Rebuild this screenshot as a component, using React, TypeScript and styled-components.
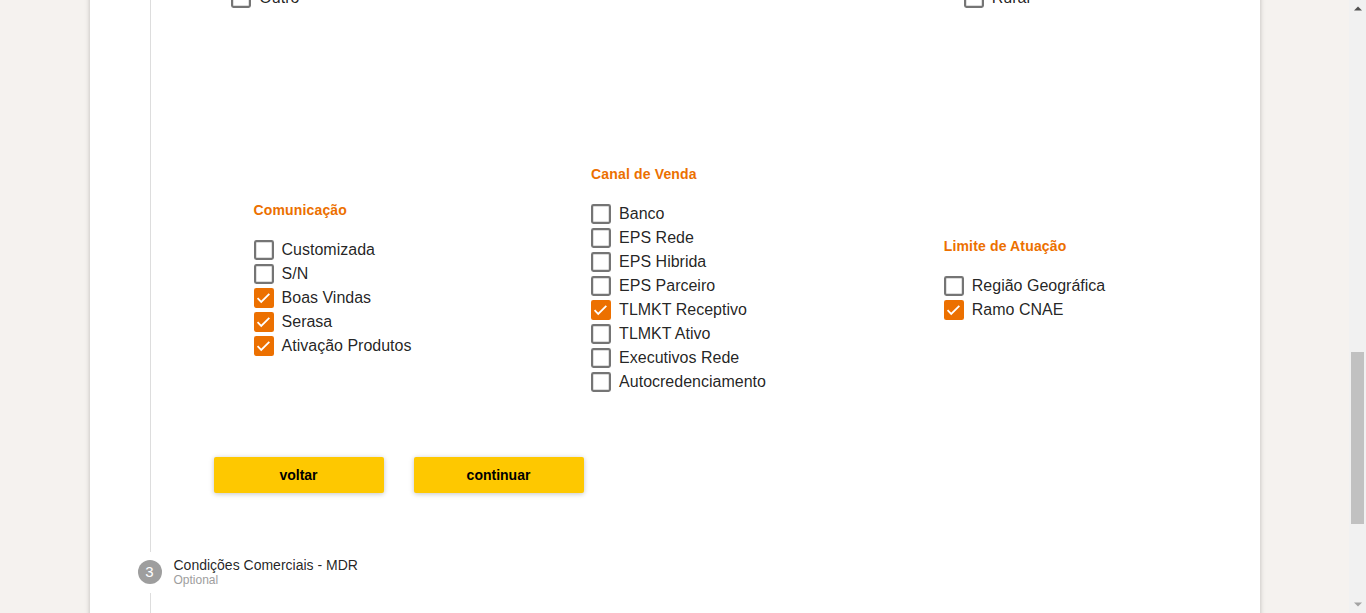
import React, { useLayoutEffect, useRef, useState } from "react";
import styled, { createGlobalStyle } from "styled-components";

const ORANGE = "#ec7000";
const SCROLL_TOP = 1194;

const Global = createGlobalStyle`
  html, body { margin: 0; padding: 0; overflow: hidden; }
  body {
    background: #f5f2ef;
    font-family: "Liberation Sans", Arial, sans-serif;
    color: rgba(0, 0, 0, 0.87);
  }
`;

const Shell = styled.div`
  display: flex;
  height: 100vh;
`;

const Main = styled.main`
  flex: 1;
  min-width: 0;
  overflow-y: auto;
  scrollbar-width: none;
  &::-webkit-scrollbar { display: none; }
`;

const Rail = styled.div`
  width: 17px;
  flex: none;
  display: flex;
  flex-direction: column;
  background: #f1f1f1;
`;

const RailButton = styled.div`
  height: 17px;
  flex: none;
  display: flex;
  align-items: center;
  justify-content: center;
`;

const Track = styled.div`
  flex: 1;
  position: relative;
`;

const Thumb = styled.div`
  position: absolute;
  left: 2px;
  right: 2px;
  background: #c1c1c1;
`;

const Page = styled.div`
  padding: 30px 0 58px;
`;

const Card = styled.div`
  width: 1170px;
  margin: 0 auto;
  background: #fff;
  box-shadow: 0 1px 6px rgba(0, 0, 0, 0.12), 0 1px 4px rgba(0, 0, 0, 0.12);
  padding: 24px 0;
  box-sizing: border-box;
`;

const StepHeader = styled.div`
  display: flex;
  align-items: center;
  gap: 12px;
  padding: 5px 0 6px 48px;
`;

const StepCircle = styled.div<{ $active?: boolean }>`
  width: 24px;
  height: 24px;
  border-radius: 50%;
  background: ${(p) => (p.$active ? ORANGE : "#9e9e9e")};
  color: #fff;
  font-size: 15px;
  line-height: 24px;
  text-align: center;
  flex: none;
`;

const StepLabel = styled.div`
  display: flex;
  flex-direction: column;
  justify-content: center;
  min-height: 30px;
`;

const StepTitle = styled.div`
  font-size: 14px;
  line-height: 16px;
  color: rgba(0, 0, 0, 0.87);
`;

const StepOptional = styled.div`
  font-size: 12px;
  line-height: 14px;
  color: #9e9e9e;
`;

const StepBody = styled.div<{ $open?: boolean }>`
  margin-left: 60px;
  border-left: 1px solid #dddddd;
  min-height: 24px;
  padding: ${(p) => (p.$open ? "24px 62px 59px 9px" : "0")};
`;

const Sections = styled.div`
  display: flex;
  flex-direction: column;
  gap: 156px;
`;

const SectionGrid = styled.div`
  display: grid;
  grid-template-columns: repeat(3, 1fr);
  justify-items: center;
  align-items: center;
`;

const Group = styled.div`
  display: flex;
  flex-direction: column;
`;

const GroupTitle = styled.div`
  color: ${ORANGE};
  font-weight: bold;
  font-size: 14px;
  line-height: 16px;
  letter-spacing: 0.15px;
  margin-bottom: 20px;
`;

const Row = styled.label`
  display: flex;
  align-items: center;
  gap: 8px;
  height: 24px;
  font-size: 16px;
  white-space: nowrap;
  cursor: pointer;
`;

const BoxSvg = styled.svg`
  width: 20px;
  height: 20px;
  flex: none;
  display: block;
`;

const Actions = styled.div`
  display: flex;
  gap: 30px;
  margin: 63px 0 0 54px;
`;

const Button = styled.button`
  width: 170px;
  height: 36px;
  border: none;
  border-radius: 2px;
  background: #fec800;
  color: #000;
  font-family: "Liberation Sans", Arial, sans-serif;
  font-weight: bold;
  font-size: 14px;
  box-shadow: 0 1px 6px rgba(0, 0, 0, 0.12), 0 1px 4px rgba(0, 0, 0, 0.12);
  cursor: pointer;
`;

function Checkbox({ checked }: { checked?: boolean }) {
  return checked ? (
    <BoxSvg viewBox="3 3 18 18">
      <rect x="3" y="3" width="18" height="18" rx="2" fill={ORANGE} />
      <path d="M6.2 12.2l3.3 3.3 7.3-7.3" fill="none" stroke="#fff" strokeWidth="1.6" />
    </BoxSvg>
  ) : (
    <BoxSvg viewBox="3 3 18 18">
      <rect x="4" y="4" width="16" height="16" rx="1.2" fill="none" stroke="#757575" strokeWidth="2" />
    </BoxSvg>
  );
}

type Item = [string, boolean?];
type GroupData = { title: string; items: Item[] };

const sections: GroupData[][] = [
  [
    {
      title: "Ramo de Atividade",
      items: [
        ["Alimentação"], ["Vestuário"], ["Farmácia"], ["Postos"], ["Supermercado"], ["Restaurante"],
        ["Educação"], ["Saúde"], ["Turismo"], ["Automotivo"], ["Construção"], ["Outros"],
      ],
    },
    { title: "Porte", items: [["Micro"], ["Pequeno", true], ["Médio"], ["Grande"]] },
    { title: "Faturamento", items: [["Até 81 mil"], ["Até 360 mil"], ["Até 4,8 mi"], ["Acima de 4,8 mi"], ["Não informado"]] },
  ],
  [
    { title: "Tipo de Pessoa", items: [["Pessoa Física", true], ["Pessoa Jurídica", true]] },
    { title: "Produto", items: [["Crédito"], ["Débito"], ["Voucher"], ["Parcelado"], ["Antecipação"], ["Conta Digital"]] },
    { title: "Bandeiras", items: [["Visa"], ["Mastercard"], ["Elo"], ["Hipercard"], ["Amex"], ["Diners"], ["Cabal"]] },
  ],
  [
    { title: "Segmento", items: [["Varejo"], ["Serviços"], ["Prestadores de Serviços"], ["Indústria"], ["Agronegócio"], ["Outro"]] },
    { title: "Perfil", items: [["Novo"], ["Ativo"], ["Inativo"], ["Reativado"]] },
    { title: "Localização", items: [["Capital"], ["Interior"], ["Litoral"], ["Zona Urbana"], ["Periferia"], ["Rural"]] },
  ],
  [
    {
      title: "Comunicação",
      items: [["Customizada"], ["S/N"], ["Boas Vindas", true], ["Serasa", true], ["Ativação Produtos", true]],
    },
    {
      title: "Canal de Venda",
      items: [
        ["Banco"], ["EPS Rede"], ["EPS Hibrida"], ["EPS Parceiro"], ["TLMKT Receptivo", true],
        ["TLMKT Ativo"], ["Executivos Rede"], ["Autocredenciamento"],
      ],
    },
    { title: "Limite de Atuação", items: [["Região Geográfica"], ["Ramo CNAE", true]] },
  ],
];

function Step({ n, title, optional, active, last, children }: {
  n: number; title: string; optional?: boolean; active?: boolean; last?: boolean; children?: React.ReactNode;
}) {
  return (
    <>
      <StepHeader>
        <StepCircle $active={active}>{n}</StepCircle>
        <StepLabel>
          <StepTitle>{title}</StepTitle>
          {optional && <StepOptional>Optional</StepOptional>}
        </StepLabel>
      </StepHeader>
      {!last && <StepBody $open={!!children}>{children}</StepBody>}
    </>
  );
}

export default function App() {
  const mainRef = useRef<HTMLElement>(null);
  const [thumb, setThumb] = useState({ top: 335, height: 172 });

  useLayoutEffect(() => {
    const el = mainRef.current;
    if (!el) return;
    el.scrollTop = SCROLL_TOP;
    const track = el.clientHeight - 34;
    const height = Math.max(18, Math.round((track * el.clientHeight) / el.scrollHeight));
    const max = el.scrollHeight - el.clientHeight;
    const top = max > 0 ? Math.round(((track - height) * el.scrollTop) / max) : 0;
    setThumb({ top, height });
  }, []);

  return (
    <Shell>
      <Global />
      <Main ref={mainRef}>
        <Page>
          <Card>
            <Step n={1} title="Dados do Parceiro" />
            <Step n={2} title="Segmentação" active>
              <Sections>
                {sections.map((groups, si) => (
                  <SectionGrid key={si}>
                    {groups.map((g) => (
                      <Group key={g.title}>
                        <GroupTitle>{g.title}</GroupTitle>
                        {g.items.map(([label, checked]) => (
                          <Row key={label}>
                            <Checkbox checked={checked} />
                            {label}
                          </Row>
                        ))}
                      </Group>
                    ))}
                  </SectionGrid>
                ))}
              </Sections>
              <Actions>
                <Button>voltar</Button>
                <Button>continuar</Button>
              </Actions>
            </Step>
            <Step n={3} title="Condições Comerciais - MDR" optional />
            <Step n={4} title="Condições Comerciais - Antecipação" optional />
            <Step n={5} title="Documentação" />
            <Step n={6} title="Revisão" last />
          </Card>
        </Page>
      </Main>
      <Rail>
        <RailButton>
          <svg width="8" height="5" viewBox="0 0 8 5"><path d="M0 4.5L4 0.5 8 4.5z" fill="#505050" /></svg>
        </RailButton>
        <Track>
          <Thumb style={{ top: thumb.top, height: thumb.height }} />
        </Track>
        <RailButton>
          <svg width="8" height="5" viewBox="0 0 8 5"><path d="M0 0.5L4 4.5 8 0.5z" fill="#a3a3a3" /></svg>
        </RailButton>
      </Rail>
    </Shell>
  );
}
